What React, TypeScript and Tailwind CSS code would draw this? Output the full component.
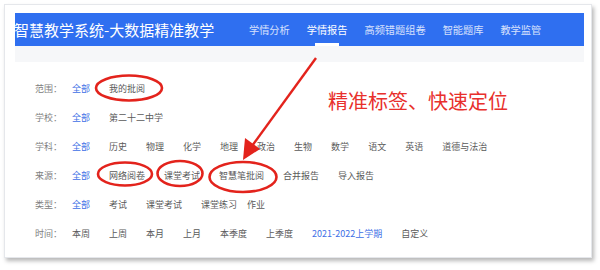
import React from "react";

const font = { fontFamily: '"Noto Sans CJK SC", "Noto Sans", sans-serif' };

const navItems = ["学情分析", "学情报告", "高频错题组卷", "智能题库", "教学监管"];

type Row = { label: string; items: string[]; active?: number };

const rows: Row[] = [
  { label: "范围：", items: ["全部", "我的批阅"], active: 0 },
  { label: "学校：", items: ["全部", "第二十二中学"], active: 0 },
  {
    label: "学科：",
    items: ["全部", "历史", "物理", "化学", "地理", "政治", "生物", "数学", "语文", "英语", "道德与法治"],
    active: 0,
  },
  { label: "来源：", items: ["全部", "网络阅卷", "课堂考试", "智慧笔批阅", "合并报告", "导入报告"], active: 0 },
  { label: "类型：", items: ["全部", "考试", "课堂考试", "课堂练习", "作业"], active: 0 },
  {
    label: "时间：",
    items: ["本周", "上周", "本月", "上月", "本季度", "上季度", "2021-2022上学期", "自定义"],
    active: 6,
  },
];

function Annotations() {
  return (
    <svg className="absolute left-0 top-0 pointer-events-none" width="600" height="270" viewBox="0 0 600 270">
      <g fill="none" stroke="#e3231c" strokeWidth="2.6">
        <ellipse cx="129" cy="88" rx="33" ry="12.5" />
        <ellipse cx="125" cy="174" rx="27" ry="11.5" />
        <ellipse cx="180" cy="173.5" rx="22.5" ry="12.5" />
        <ellipse cx="243" cy="177" rx="33.5" ry="15" />
        <line x1="316" y1="58" x2="252" y2="146" strokeWidth="2.4" />
      </g>
      <polygon points="243,160 245,138 260,149" fill="#e3231c" />
    </svg>
  );
}

export default function App() {
  return (
    <div className="relative w-[600px] h-[270px] bg-white overflow-hidden" style={font}>
      <div className="ml-[4px] mt-[4px] w-[588px] h-[254px] bg-white border border-gray-200 shadow-[2px_3px_4px_rgba(0,0,0,0.28)] pl-[10px] pr-[7px] pt-[8px]">
        <div className="h-[33px] bg-[#2f6ff0] flex items-stretch overflow-hidden">
          <div className="flex items-center text-white text-[15px] leading-none -ml-[1px] w-[235px] shrink-0 whitespace-nowrap">
            智慧教学系统-大数据精准教学
          </div>
          <div className="flex items-stretch gap-[17px] text-[10.2px]">
            {navItems.map((n, i) => (
              <div key={n} className="relative flex items-center whitespace-nowrap">
                <span className={i === 1 ? "text-white" : "text-white/80"}>{n}</span>
                {i === 1 && (
                  <span className="absolute bottom-0 left-1/2 -translate-x-1/2 w-[24px] h-[3px] bg-white" />
                )}
              </div>
            ))}
          </div>
        </div>
        <div className="h-[16px] bg-[#f6f7f9]" />
        <div className="pt-[12px] pl-[20px]">
          {rows.map((r) => (
            <div key={r.label} className="h-[29px] flex items-center text-[9px] leading-none">
              <span className="w-[37px] shrink-0 text-[#808080]">{r.label}</span>
              <div className="flex items-center gap-[19px]">
                {r.items.map((it, i) => (
                  <span
                    key={it}
                    className={
                      (i === r.active ? "text-[#3d6fe6] " : "text-[#5a5a5a] ") +
                      "whitespace-nowrap" +
                      (it === "作业" ? " -ml-[9px]" : "")
                    }
                  >
                    {it}
                  </span>
                ))}
              </div>
            </div>
          ))}
        </div>
      </div>
      <div className="absolute left-[328px] top-[91px] text-[20px] leading-none text-[#e8302c] whitespace-nowrap">
        精准标签、快速定位
      </div>
      <Annotations />
    </div>
  );
}
